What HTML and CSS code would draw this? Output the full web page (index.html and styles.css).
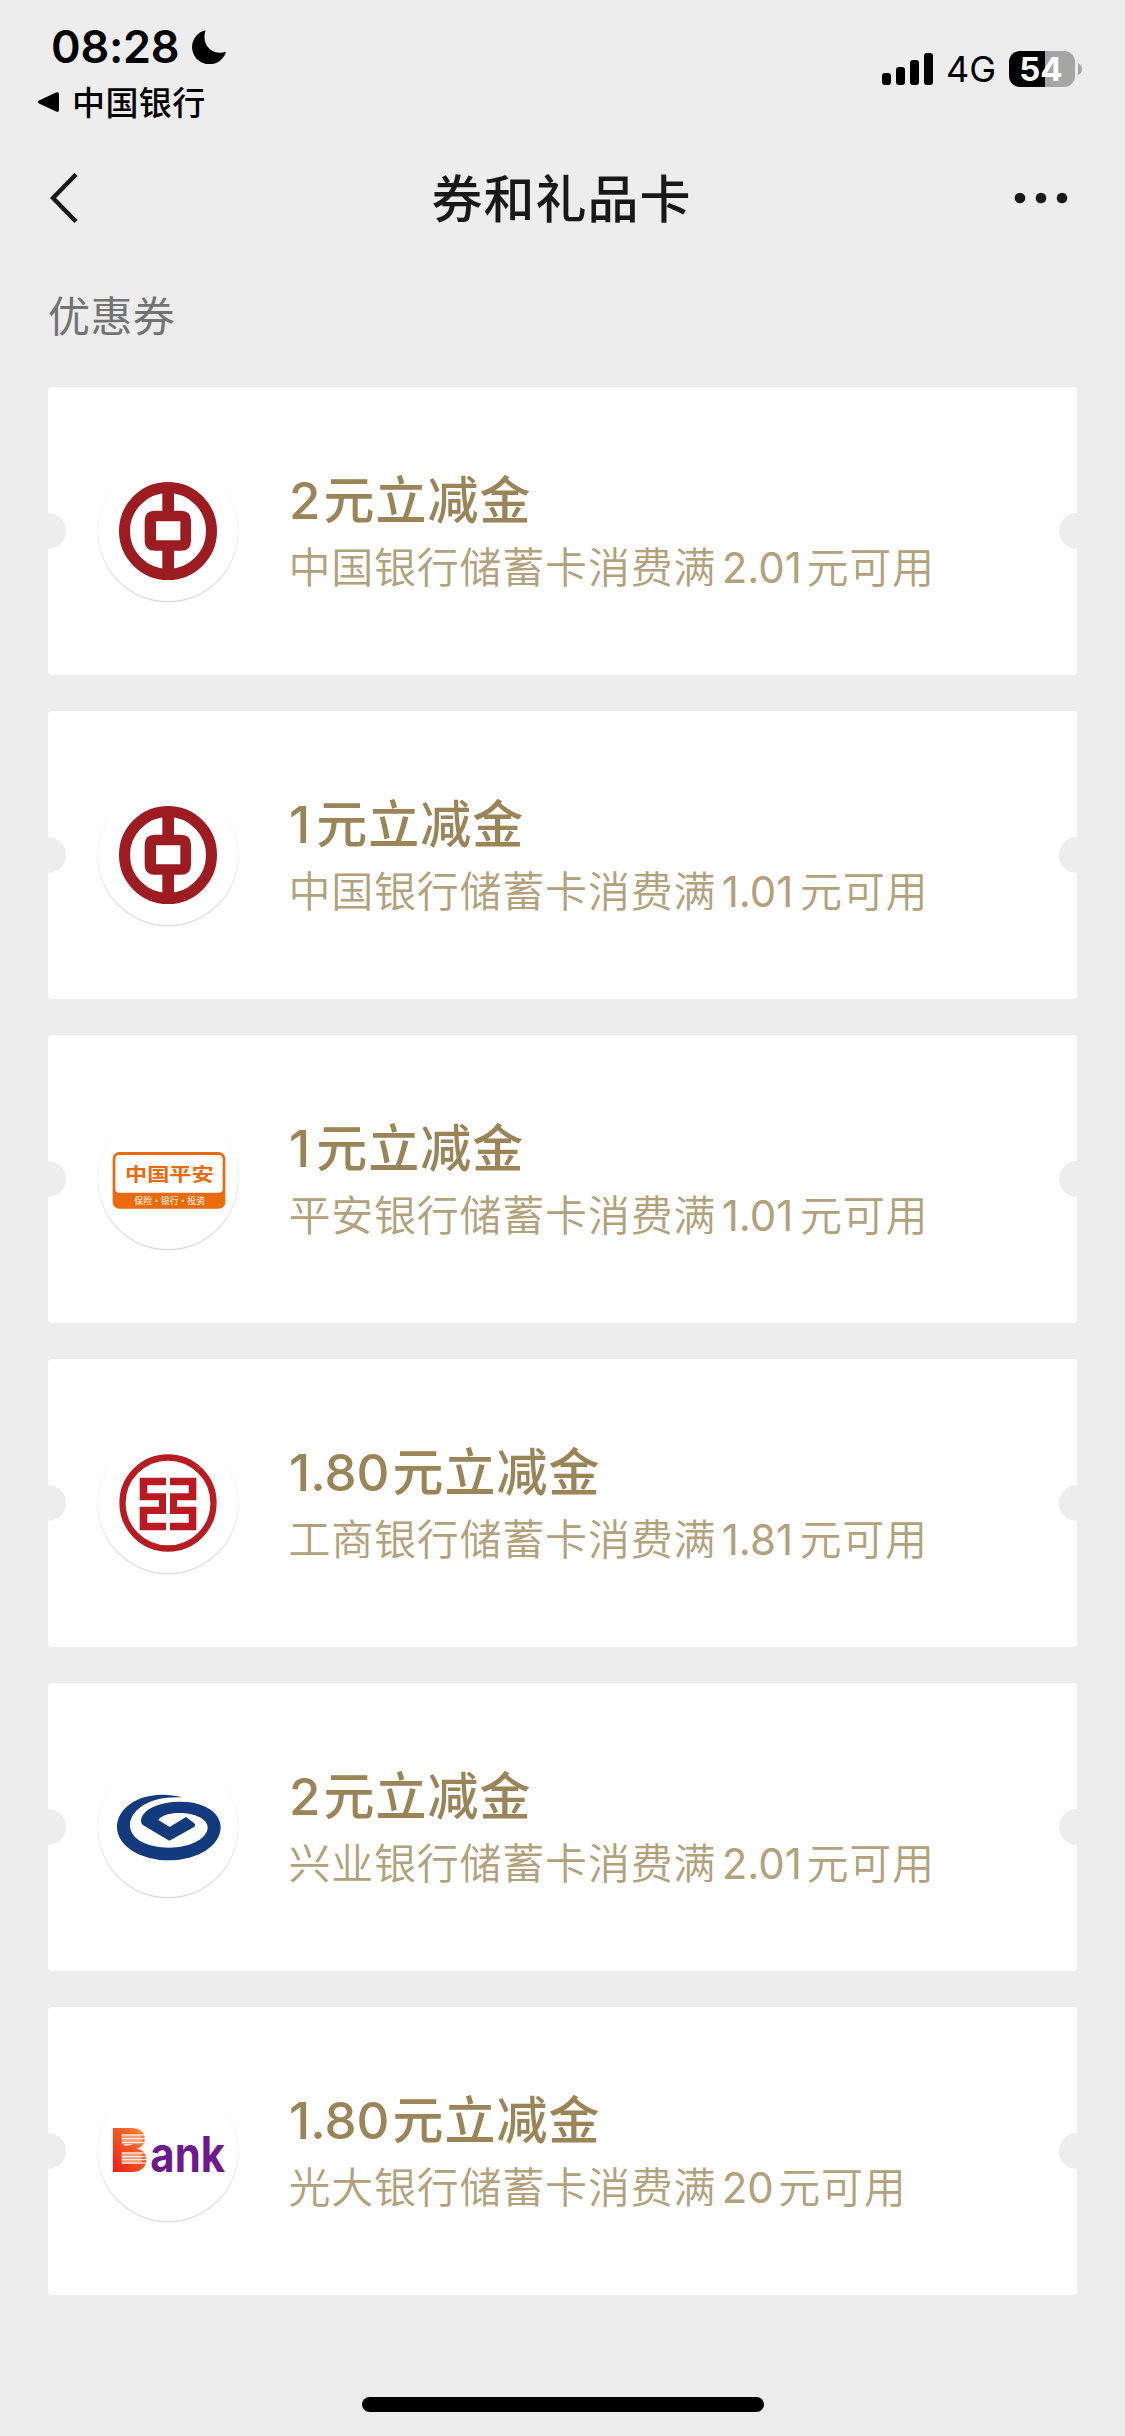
FILE: index.html
```html
<!DOCTYPE html>
<html lang="zh-CN">
<head>
<meta charset="utf-8">
<title>券和礼品卡</title>
<link rel="stylesheet" href="styles.css">
</head>
<body>
<div class="screen">
  <header class="status">
    <div class="status-left">
      <div class="clock">
        <span class="time">08:28</span>
        <svg class="moon" viewBox="0 0 34 34"><path d="M13.500 0.200A17.300 17.300 0 1 0 34 21.800C23 25.500 8.500 18 13.500 0.200Z"/></svg>
      </div>
      <div class="return">
        <svg class="triangle" viewBox="0 0 21 20"><path d="M1 8.500Q-1 10 1 11.500L18 19.600Q21 20.500 21 18V2Q21 -0.500 18 0.400Z"/></svg>
        <span>中国银行</span>
      </div>
    </div>
    <div class="status-right">
      <div class="signal"><i class="b1"></i><i class="b2"></i><i class="b3"></i><i class="b4"></i></div>
      <span class="network">4G</span>
      <div class="battery"><span>54</span></div>
      <svg class="nub" viewBox="0 0 4 12"><path d="M0 0Q4 2 4 6T0 12Z"/></svg>
    </div>
  </header>

  <nav class="navbar">
    <svg class="back" viewBox="0 0 28 50"><path d="M26 1.500L3 25L26 48.500"/></svg>
    <h1>券和礼品卡</h1>
    <svg class="more" viewBox="0 0 54 12"><circle cx="6" cy="6" r="5.300"/><circle cx="27" cy="6" r="5.300"/><circle cx="48" cy="6" r="5.300"/></svg>
  </nav>

  <h2 class="section">优惠券</h2>

  <main class="coupons">
    <article class="card">
      <svg class="logo" viewBox="54 57 420 420"><use href="#boc"/></svg>
      <div class="info">
        <h3><b>2</b>元立减金</h3>
        <p>中国银行储蓄卡消费满<b>2.01</b>元可用</p>
      </div>
    </article>
    <article class="card">
      <svg class="logo" viewBox="54 57 420 420">
        <g id="boc" class="boc">
          <circle cx="264" cy="267" r="130.500"/>
          <path class="bar" d="M264.500 130V222M264.500 310V404"/>
          <path class="coin" fill-rule="evenodd" d="M224 206H303Q333 206 333 236V296Q333 326 303 326H224Q194 326 194 296V236Q194 206 224 206ZM228 238V295H301V238Z"/>
        </g>
      </svg>
      <div class="info">
        <h3><b class="one">1</b>元立减金</h3>
        <p>中国银行储蓄卡消费满<b class="one">1.01</b>元可用</p>
      </div>
    </article>
    <article class="card">
      <svg class="logo" viewBox="54 57 420 420">
        <rect x="98" y="186" width="338" height="170" rx="20" fill="#ea6a0c"/>
        <path d="M118 195H416Q428 195 428 207V296Q428 308 416 308H118Q106 308 106 296V207Q106 195 118 195Z" fill="#fff"/>
        <text class="pa-name" x="135" y="273" textLength="266" lengthAdjust="spacingAndGlyphs">中国平安</text>
        <text class="pa-line" x="163" y="343" textLength="212" lengthAdjust="spacingAndGlyphs">保险·银行·投资</text>
      </svg>
      <div class="info">
        <h3><b class="one">1</b>元立减金</h3>
        <p>平安银行储蓄卡消费满<b class="one">1.01</b>元可用</p>
      </div>
    </article>
    <article class="card">
      <svg class="logo" viewBox="54 57 420 420">
        <g fill="#b81c22">
          <circle cx="264" cy="267" r="136.500" fill="none" stroke="#b81c22" stroke-width="19"/>
          <path d="M179 191H258V214H202V238H258V300H202V326H258V349H179V278H237V259H179Z"/>
          <path d="M349 191H270V214H326V238H270V300H326V326H270V349H349V278H291V259H349Z"/>
        </g>
      </svg>
      <div class="info">
        <h3><b class="wide">1.80</b>元立减金</h3>
        <p>工商银行储蓄卡消费满<b class="one">1.81</b>元可用</p>
      </div>
    </article>
    <article class="card">
      <svg class="logo" viewBox="54 57 420 420">
        <path fill="#123a7c" d="M308 178C200 150 111 200 111 267C111 323 180 367 267 367C353 367 422 323 422 267C422 224 372 191 303 191C235 191 184 215 183 250Q183 258 192 263L268 308L341 268Q350 261 341 254L318 237L269 267L235 246C244 232 268 225 298 225C345 225 383 243 383 268C383 302 330 329 267 329C203 329 150 304 150 262C150 215 210 172 308 178Z"/>
      </svg>
      <div class="info">
        <h3><b>2</b>元立减金</h3>
        <p>兴业银行储蓄卡消费满<b>2.01</b>元可用</p>
      </div>
    </article>
    <article class="card">
      <svg class="logo" viewBox="54 57 420 420">
        <defs>
          <linearGradient id="flame" x1="1" y1="0" x2="0.400" y2="1"><stop offset="0" stop-color="#fdb13c"/><stop offset="0.450" stop-color="#f0642a"/><stop offset="1" stop-color="#ee1c16"/></linearGradient>
        </defs>
        <text class="eb-b" transform="translate(91 330) scale(0.920 1)">B</text>
        <g fill="#f79a76"><rect x="125" y="216" width="60" height="31"/><rect x="125" y="270" width="60" height="36"/></g>
        <path d="M125 219H198M125 230H203M125 241H198M125 273H200M125 284H206M125 293H206M125 303H206" stroke="#fff" stroke-width="3"/>
        <text class="eb-ank" transform="translate(211 329) scale(0.850 1)">ank</text>
      </svg>
      <div class="info">
        <h3><b class="wide">1.80</b>元立减金</h3>
        <p>光大银行储蓄卡消费满<b>20</b>元可用</p>
      </div>
    </article>
  </main>

  <div class="home"></div>
</div>
</body>
</html>
```
FILE: styles.css
```css
* { box-sizing: border-box; }
body { margin: 0; background: #ededed; }
svg { display: block; flex: none; }
h1, h2, h3, p { margin: 0; white-space: nowrap; }
b { font-weight: inherit; letter-spacing: 0; }

.screen {
  width: 1125px;
  height: 2436px;
  display: flex;
  flex-direction: column;
  font-family: Inter, "Noto Sans CJK SC", sans-serif;
  color: #181818;
}

.status {
  height: 132px;
  display: flex;
  justify-content: space-between;
  color: #000;
}
.status-left { padding: 20px 0 0 38px; }
.clock { display: flex; align-items: center; height: 54px; padding-left: 13px; }
.time { width: 141px; font-size: 45px; font-weight: 570; line-height: 54px; letter-spacing: -0.3px; }
.moon { width: 34px; height: 34px; }
.return {
  display: flex;
  align-items: center;
  gap: 13px;
  height: 48px;
  margin-top: 4px;
  font-size: 33px;
  font-weight: 500;
  letter-spacing: 0.4px;
  line-height: 48px;
}
.return span { padding-top: 1px; }
.triangle { width: 21px; height: 20px; }
.status-right { display: flex; align-items: center; height: 36px; margin: 51px 43px 0 0; }
.signal { display: flex; align-items: flex-end; gap: 5px; height: 32px; margin-right: 16px; }
.signal i { width: 9px; border-radius: 3px; background: #000; }
.b1 { height: 12px; }
.b2 { height: 18px; }
.b3 { height: 25px; }
.b4 { height: 32px; }
.network { width: 59px; margin-left: -3px; font-size: 36px; font-weight: 430; line-height: 40px; white-space: nowrap; }
.battery {
  width: 66px;
  height: 36px;
  margin-left: 4px;
  border-radius: 11px;
  background: linear-gradient(90deg, #000 36px, #a5a5a5 36px);
  color: #fff;
  font-size: 33px;
  font-weight: 650;
  line-height: 37px;
  text-align: center;
}
.battery span { margin-right: 2px; }
.nub { width: 4px; height: 12px; margin-left: 3px; fill: #a5a5a5; }

.navbar { display: flex; align-items: center; justify-content: space-between; height: 132px; padding: 0 57px 0 50px; }
.back { width: 28px; height: 50px; margin-right: 30px; fill: none; stroke: #181818; stroke-width: 4.4; }
.navbar h1 { padding: 3px 0 0 1px; font-size: 51px; font-weight: 500; letter-spacing: 1px; line-height: 72px; }
.more { width: 54px; height: 12px; fill: #181818; }

.section {
  height: 123px;
  padding: 23px 0 0 48px;
  font-size: 42px;
  font-weight: 400;
  letter-spacing: 0.4px;
  line-height: 60px;
  color: #737373;
}

.coupons { display: flex; flex-direction: column; gap: 36px; padding: 0 48px; }
.card {
  height: 288px;
  display: flex;
  align-items: center;
  padding-left: 50px;
  border-radius: 4px;
  background:
    radial-gradient(circle at 0 144px, #ededed 17.5px, transparent 18.5px),
    radial-gradient(circle at 100% 144px, #ededed 17.5px, transparent 18.5px),
    #fff;
}
.logo { width: 140px; height: 140px; border-radius: 50%; box-shadow: 0 1px 1.5px rgba(0, 0, 0, 0.2); }
.info { padding: 4px 0 0 51px; }
.info h3 { font-size: 51px; font-weight: 500; letter-spacing: 1px; line-height: 70px; color: #9b8457; }
.info p { margin-left: -0.5px; font-size: 42px; font-weight: 350; letter-spacing: 0.77px; line-height: 64px; color: #b3a17c; }
.info h3 b { margin-right: 3px; }
.info h3 .one { margin-right: 6px; }
.info h3 .wide { margin-right: 3px; }
.info p b { font-weight: 400; margin: 0 4.5px 0 5.5px; }
.info p .one { margin-right: 6.5px; }

.boc circle { fill: none; stroke: #9c1c22; stroke-width: 33; }
.boc .bar { fill: none; stroke: #9c1c22; stroke-width: 35; }
.boc .coin { fill: #9c1c22; }
.pa-name { font: 700 56px "Noto Sans CJK SC", sans-serif; fill: #ea6a0c; }
.pa-line { font: 500 28px "Noto Sans CJK SC", sans-serif; fill: #fde6d3; }
.eb-b { font: 900 183px Inter, sans-serif; fill: url(#flame); }
.eb-ank { font: 700 148px Inter, sans-serif; fill: #6f1a8c; }

.home { width: 402px; height: 15px; margin: 102px 0 0 362px; border-radius: 8px; background: #000; }
```
